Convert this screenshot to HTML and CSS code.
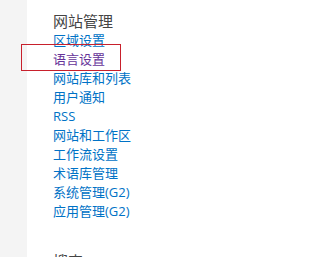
FILE: index.html
```html
<!DOCTYPE html>
<html lang="zh-CN">
<head>
<meta charset="utf-8">
<title>网站设置</title>
<link rel="stylesheet" href="styles.css">
</head>
<body>
<div class="page">
  <aside class="rail"></aside>
  <main class="content">
    <section class="group">
      <h2 class="group-title">网站管理</h2>
      <ul class="links">
        <li><a href="#">区域设置</a></li>
        <li><a href="#" class="visited">语言设置</a></li>
        <li><a href="#">网站库和列表</a></li>
        <li><a href="#">用户通知</a></li>
        <li><a href="#">RSS</a></li>
        <li><a href="#">网站和工作区</a></li>
        <li><a href="#">工作流设置</a></li>
        <li><a href="#">术语库管理</a></li>
        <li><a href="#">系统管理(G2)</a></li>
        <li><a href="#">应用管理(G2)</a></li>
      </ul>
    </section>
    <section class="group">
      <h2 class="group-title">搜索</h2>
    </section>
  </main>
  <div class="highlight"></div>
</div>
</body>
</html>
```

FILE: styles.css
```css
html, body {
  margin: 0;
  padding: 0;
  background: #ffffff;
}

body {
  font-family: "Open Sans", "Noto Sans", "Noto Sans CJK SC", sans-serif;
}

.page {
  position: relative;
  display: flex;
  min-height: 100vh;
}

.rail {
  width: 27px;
  flex: none;
  background: #f4f4f4;
}

.content {
  flex: 1;
  padding: 11px 0 0 26px;
}

.group {
  margin-bottom: 30px;
}

.group-title {
  margin: 0;
  font-size: 15px;
  line-height: 20px;
  font-weight: normal;
  color: #444444;
}

.links {
  list-style: none;
  margin: 0;
  padding: 0;
}

.links li {
  font-size: 13px;
  line-height: 19px;
}

.links a {
  color: #0072c6;
  text-decoration: none;
}

.links a.visited {
  color: #663399;
}

.highlight {
  position: absolute;
  left: 21px;
  top: 44px;
  width: 98px;
  height: 25px;
  border: 1px solid #c8202c;
}
```
